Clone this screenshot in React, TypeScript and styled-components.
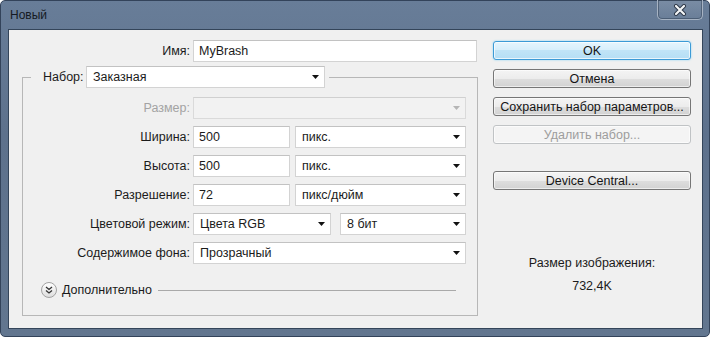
import styled, { createGlobalStyle } from "styled-components";

const GlobalStyle = createGlobalStyle`
  html, body { margin: 0; padding: 0; background: #ffffff; }
  body {
    font-family: "Liberation Sans", Arial, sans-serif;
    font-size: 12.5px;
    color: #1b1b1b;
  }
  * { box-sizing: border-box; }
`;

const Window = styled.div`
  width: 710px;
  height: 337px;
  display: flex;
  flex-direction: column;
  background: linear-gradient(#687d98, #5d718c 40%, #62768f);
  border: 1px solid #33435a;
  border-radius: 5px;
  padding: 0 6px 7px 7px;
`;

const TitleBar = styled.div`
  height: 28px;
  display: flex;
  align-items: center;
  justify-content: space-between;
  flex-shrink: 0;
`;

const Title = styled.span`
  padding-left: 2px;
  color: #151a22;
  font-size: 12px;
`;

const CloseButton = styled.div`
  align-self: flex-start;
  margin-top: -1px;
  width: 46px;
  height: 20px;
  display: flex;
  align-items: center;
  justify-content: center;
  border: 1px solid #a7b3c3;
  border-top: none;
  border-radius: 0 0 5px 5px;
  background: linear-gradient(rgba(255, 255, 255, 0.12), rgba(255, 255, 255, 0.02));
  box-shadow: inset 0 0 0 1px rgba(40, 55, 75, 0.45);
`;

const Client = styled.div`
  flex: 1;
  display: flex;
  background: #f0f0f0;
  border: 1px solid #34455a;
`;

const LeftColumn = styled.div`
  width: 469px;
  padding: 10px 0 0 13px;
`;

const NameRow = styled.div`
  display: grid;
  grid-template-columns: 168px 284px;
  column-gap: 3px;
  align-items: center;
`;

const Label = styled.span<{ $disabled?: boolean }>`
  text-align: right;
  white-space: nowrap;
  color: ${(p) => (p.$disabled ? "#a3a3a3" : "#1b1b1b")};
`;

const TextBox = styled.div<{ $width?: number }>`
  width: ${(p) => (p.$width ? `${p.$width}px` : "100%")};
  height: 22px;
  display: flex;
  align-items: center;
  padding-left: 5px;
  background: #ffffff;
  border: 1px solid #d3d3d3;
  border-top-color: #c2c2c2;
  white-space: nowrap;
`;

const SelectBox = styled.div<{ $width?: number; $disabled?: boolean }>`
  width: ${(p) => (p.$width ? `${p.$width}px` : "100%")};
  height: 22px;
  display: flex;
  align-items: center;
  justify-content: space-between;
  padding: 0 5px 0 6px;
  background: ${(p) => (p.$disabled ? "#f2f2f2" : "#ffffff")};
  border: 1px solid ${(p) => (p.$disabled ? "#dadada" : "#d3d3d3")};
  border-top-color: ${(p) => (p.$disabled ? "#d0d0d0" : "#c2c2c2")};
  white-space: nowrap;
`;

const Group = styled.fieldset`
  margin: 4px 0 0;
  width: 456px;
  padding: 9px 11px 17px 0;
  border: 1px solid #b7b7b7;
`;

const Legend = styled.legend`
  margin-left: 8px;
  padding: 0 4px 0 12px;
`;

const LegendInner = styled.div`
  display: flex;
  align-items: center;
`;

const LegendLabel = styled.span`
  width: 43px;
`;

const FormGrid = styled.div`
  display: grid;
  grid-template-columns: 167px 273px;
  grid-auto-rows: 22px;
  column-gap: 3px;
  row-gap: 7px;
  align-items: center;
`;

const Pair = styled.div<{ $gap: number }>`
  display: flex;
  gap: ${(p) => p.$gap}px;
`;

const MoreRow = styled.div`
  margin-top: 18px;
  height: 16px;
  display: flex;
  align-items: center;
  padding-left: 18px;
`;

const MoreIcon = styled.div`
  width: 16px;
  height: 16px;
  border-radius: 50%;
  border: 1px solid #a2a2a2;
  background: linear-gradient(#ffffff, #dedede);
  display: flex;
  align-items: center;
  justify-content: center;
  margin-right: 5px;
`;

const MoreLine = styled.div`
  flex: 1;
  height: 1px;
  margin: 1px 10px 0 6px;
  background: #a9a9a9;
`;

const RightColumn = styled.div`
  width: 198px;
  margin-left: 15px;
  padding-top: 11px;
  display: flex;
  flex-direction: column;
`;

const ButtonStack = styled.div`
  display: flex;
  flex-direction: column;
  gap: 9px;
`;

const Button = styled.div<{ $primary?: boolean; $disabled?: boolean }>`
  height: 19px;
  display: flex;
  align-items: center;
  justify-content: center;
  border-radius: 3px;
  white-space: nowrap;
  color: ${(p) => (p.$disabled ? "#9d9d9d" : "#151515")};
  border: 1px solid
    ${(p) => (p.$primary ? "#3c9ad6" : p.$disabled ? "#c0c3c5" : "#767676")};
  background: ${(p) =>
    p.$primary
      ? "linear-gradient(#e6f5fd, #d6eefb 50%, #c0e4f7 50%, #b5def5)"
      : p.$disabled
      ? "#f4f4f4"
      : "linear-gradient(#f4f4f4, #ececec 50%, #dedede 50%, #d2d2d2)"};
  box-shadow: ${(p) =>
    p.$primary
      ? "0 0 2px #7fd0f7, inset 0 0 0 1px rgba(255,255,255,0.7)"
      : "inset 0 0 0 1px rgba(255,255,255,0.6)"};
`;

const SingleButton = styled(Button)`
  margin-top: 27px;
`;

const SizeInfo = styled.div`
  margin-top: 66px;
  text-align: center;
  line-height: 14px;
`;

const SizeValue = styled.div`
  margin-top: 9px;
`;

function Arrow({ disabled }: { disabled?: boolean }) {
  return (
    <svg width="7" height="4" viewBox="0 0 7 4">
      <polygon points="0,0 7,0 3.5,4" fill={disabled ? "#b5b5b5" : "#111"} />
    </svg>
  );
}

function Select({
  value,
  width,
  disabled,
}: {
  value?: string;
  width?: number;
  disabled?: boolean;
}) {
  return (
    <SelectBox $width={width} $disabled={disabled}>
      <span>{value}</span>
      <Arrow disabled={disabled} />
    </SelectBox>
  );
}

export default function App() {
  return (
    <>
      <GlobalStyle />
      <Window>
        <TitleBar>
          <Title>Новый</Title>
          <CloseButton>
            <svg width="14" height="12" viewBox="0 0 14 12">
              <path d="M3 2 L11 10 M11 2 L3 10" stroke="#2c3646" strokeWidth="4" strokeLinecap="round" />
              <path d="M3 2 L11 10 M11 2 L3 10" stroke="#f4f6f8" strokeWidth="2.2" strokeLinecap="round" />
            </svg>
          </CloseButton>
        </TitleBar>
        <Client>
          <LeftColumn>
            <NameRow>
              <Label>Имя:</Label>
              <TextBox>MyBrash</TextBox>
            </NameRow>
            <Group>
              <Legend>
                <LegendInner>
                  <LegendLabel>Набор:</LegendLabel>
                  <Select value="Заказная" width={239} />
                </LegendInner>
              </Legend>
              <FormGrid>
                <Label $disabled>Размер:</Label>
                <Select disabled />

                <Label>Ширина:</Label>
                <Pair $gap={5}>
                  <TextBox $width={97}>500</TextBox>
                  <Select value="пикс." width={171} />
                </Pair>

                <Label>Высота:</Label>
                <Pair $gap={5}>
                  <TextBox $width={97}>500</TextBox>
                  <Select value="пикс." width={171} />
                </Pair>

                <Label>Разрешение:</Label>
                <Pair $gap={5}>
                  <TextBox $width={97}>72</TextBox>
                  <Select value="пикс/дюйм" width={171} />
                </Pair>

                <Label>Цветовой режим:</Label>
                <Pair $gap={9}>
                  <Select value="Цвета RGB" width={138} />
                  <Select value="8 бит" width={126} />
                </Pair>

                <Label>Содержимое фона:</Label>
                <Select value="Прозрачный" />
              </FormGrid>
              <MoreRow>
                <MoreIcon>
                  <svg width="8" height="8" viewBox="0 0 8 8">
                    <path d="M1 1 L4 3.5 L7 1 M1 4.5 L4 7 L7 4.5" stroke="#333" strokeWidth="1.3" fill="none" />
                  </svg>
                </MoreIcon>
                <span>Дополнительно</span>
                <MoreLine />
              </MoreRow>
            </Group>
          </LeftColumn>
          <RightColumn>
            <ButtonStack>
              <Button $primary>OK</Button>
              <Button>Отмена</Button>
              <Button>Сохранить набор параметров...</Button>
              <Button $disabled>Удалить набор...</Button>
            </ButtonStack>
            <SingleButton>Device Central...</SingleButton>
            <SizeInfo>
              <div>Размер изображения:</div>
              <SizeValue>732,4K</SizeValue>
            </SizeInfo>
          </RightColumn>
        </Client>
      </Window>
    </>
  );
}
